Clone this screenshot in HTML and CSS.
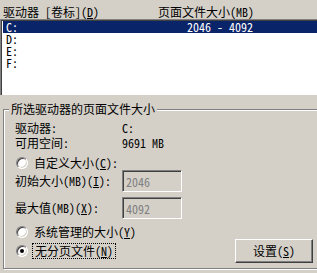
FILE: index.html
```html
<!DOCTYPE html>
<html lang="zh-CN">
<head>
<meta charset="utf-8">
<link rel="stylesheet" href="styles.css">
</head>
<body>
<div class="page">
  <div class="hdr">
    <span class="col1">驱动器 [卷标](<u>D</u>)</span>
    <span class="col2">页面文件大小(MB)</span>
  </div>
  <div class="list">
    <div class="row sel"><span class="col1">C:</span><span class="col2">2046 - 4092</span></div>
    <div class="row"><span class="col1">D:</span><span class="col2"></span></div>
    <div class="row"><span class="col1">E:</span><span class="col2"></span></div>
    <div class="row"><span class="col1">F:</span><span class="col2"></span></div>
  </div>
  <div class="group">
    <span class="legend">所选驱动器的页面文件大小</span>
    <div class="info">
      <span>驱动器:</span><span>C:</span>
      <span>可用空间:</span><span>9691 MB</span>
    </div>
    <div class="radio-row r1"><span class="radio"></span><span>自定义大小(<u>C</u>):</span></div>
    <div class="field f1"><span class="flabel">初始大小(MB)(<u>I</u>):</span><span class="input">2046</span></div>
    <div class="field f2"><span class="flabel">最大值(MB)(<u>X</u>):</span><span class="input">4092</span></div>
    <div class="radio-row r2"><span class="radio"></span><span>系统管理的大小(<u>Y</u>)</span></div>
    <div class="last">
      <div class="radio-row"><span class="radio on"></span><span class="focus">无分页文件(<u>N</u>)</span></div>
      <button class="btn">设置(<u>S</u>)</button>
    </div>
  </div>
</div>
</body>
</html>
```
FILE: styles.css
```css
* { box-sizing: border-box; }
html, body {
  margin: 0;
  padding: 0;
  background: #d4d0c8;
  overflow: hidden;
}
body {
  font-family: "Noto Sans Mono CJK SC", "Liberation Mono", "Noto Sans CJK SC", monospace;
  font-size: 12px;
  line-height: 12px;
  color: #000;
}
u { text-decoration: underline; }
.page {
  width: 330px;
  height: 273px;
}
.hdr {
  height: 19px;
  display: flex;
  padding: 6px 0 0 3px;
}
.hdr .col1 { width: 155px; }
.list {
  height: 76px;
  background: #fff;
  border-top: 1px solid #808080;
  border-left: 1px solid #808080;
  box-shadow: inset 1px 1px 0 #404040;
  padding: 1px 0 0 2px;
}
.row {
  height: 12px;
  display: flex;
}
.row .col1 { width: 156px; padding-left: 3px; }
.row .col2 { padding-left: 28px; }
.row.sel { background: #0a246a; color: #fff; }
.group {
  position: relative;
  margin: 14px 0 0 3px;
  height: 160px;
  border: 1px solid #808080;
  box-shadow: inset 1px 1px 0 #fff, 1px 1px 0 #fff;
  padding: 12px 0 0 11px;
}
.legend {
  position: absolute;
  top: -7px;
  left: 5px;
  padding: 0 2px;
  background: #d4d0c8;
}
.info {
  display: grid;
  grid-template-columns: 107px auto;
  row-gap: 3px;
}
.radio-row {
  display: flex;
  align-items: center;
  height: 12px;
  margin-left: 1px;
  gap: 6px;
}
.r1 { margin-top: 8px; }
.r2 { margin-top: 7px; }
.radio {
  position: relative;
  width: 12px;
  height: 12px;
  border-radius: 50%;
  background: #fff;
  border: 1px solid;
  border-color: #808080 #fff #fff #808080;
  box-shadow: inset 1px 1px 0 #404040, inset -1px -1px 0 #d4d0c8;
  flex: none;
}
.radio.on::after {
  content: "";
  position: absolute;
  left: 3px;
  top: 3px;
  width: 4px;
  height: 4px;
  border-radius: 50%;
  background: #000;
}
.field {
  display: flex;
  align-items: center;
  height: 22px;
}
.f1 { margin-top: 1px; }
.f2 { margin-top: 5px; }
.flabel { width: 107px; }
.input {
  width: 60px;
  height: 22px;
  border: 1px solid;
  border-color: #808080 #fff #fff #808080;
  box-shadow: inset 1px 1px 0 #404040, inset -1px -1px 0 #d4d0c8;
  color: #808080;
  padding: 5px 0 0 3px;
}
.last {
  display: grid;
  grid-template-columns: 220px 78px;
  align-items: center;
  margin-top: 1px;
  height: 24px;
}
.focus {
  outline: 1px dotted #000;
  outline-offset: 1px;
  padding: 0 1px;
}
.btn {
  width: 78px;
  height: 24px;
  font: inherit;
  color: #000;
  background: #d4d0c8;
  border: 1px solid;
  border-color: #fff #404040 #404040 #fff;
  box-shadow: inset -1px -1px 0 #808080;
  padding: 0;
  margin: 0;
}
```
